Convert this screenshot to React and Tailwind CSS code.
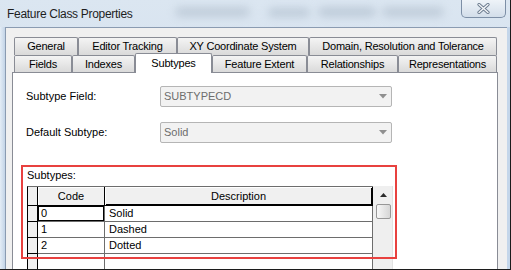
import React from "react";

const topTabs = [
  { label: "General", w: "w-[64px]" },
  { label: "Editor Tracking", w: "w-[99px]" },
  { label: "XY Coordinate System", w: "w-[132px]" },
  { label: "Domain, Resolution and Tolerance", w: "w-[188px]" },
];

const bottomTabs = [
  { label: "Fields", w: "w-[58px]" },
  { label: "Indexes", w: "w-[63px]" },
  { label: "Subtypes", w: "w-[77px]", active: true },
  { label: "Feature Extent", w: "w-[95px]" },
  { label: "Relationships", w: "w-[91px]" },
  { label: "Representations", w: "w-[99px]" },
];

const subtypes = [
  { code: "0", desc: "Solid" },
  { code: "1", desc: "Dashed" },
  { code: "2", desc: "Dotted" },
  { code: "", desc: "" },
];

const Tab = ({ label, w, active, tall }) => {
  if (active) {
    return (
      <div
        className={`relative z-10 -mb-px flex h-[20px] items-center justify-center rounded-t-[2px] border border-b-0 border-[#898c95] bg-white pb-[1px] ${w}`}
      >
        {label}
      </div>
    );
  }
  return (
    <div
      className={`flex ${tall ? "h-[18px]" : "h-[17px]"} items-center justify-center rounded-t-[2px] border border-b-0 border-[#898c95] bg-gradient-to-b from-[#f4f4f4] to-[#dadada] ${w}`}
    >
      {label}
    </div>
  );
};

const Dropdown = ({ value }) => (
  <div className="flex h-[21px] w-[232px] items-center justify-between rounded-[2px] border border-[#b5b5b5] bg-[#f2f2f2] pl-[3px] pr-[4px] text-[11px] text-[#6d6d6d]">
    <span>{value}</span>
    <svg width="8" height="5" viewBox="0 0 8 5">
      <path d="M0 0 H8 L4 4.5 Z" fill="#8f8f8f" />
    </svg>
  </div>
);

export default function App() {
  return (
    <div className="relative h-[270px] w-[511px] overflow-hidden border-b border-r border-[#1c1c1c] bg-gradient-to-b from-[#dbe6f1] to-[#c9d9ea] font-['Liberation_Sans',Arial,sans-serif] text-black">
      {/* title bar */}
      <div className="relative flex h-[27px] items-center">
        {/* blurred window behind the glass */}
        <div className="pointer-events-none absolute left-[175px] top-[7px] h-[10px] w-[75px] rounded-full bg-[#a7b5c4] opacity-50 blur-[4px]" />
        <div className="pointer-events-none absolute left-[268px] top-[8px] h-[9px] w-[42px] rounded-full bg-[#a3b2c2] opacity-50 blur-[4px]" />
        <div className="pointer-events-none absolute left-[318px] top-[7px] h-[10px] w-[58px] rounded-full bg-[#a3b2c2] opacity-50 blur-[4px]" />
        <div className="pointer-events-none absolute left-[382px] top-[7px] h-[10px] w-[62px] rounded-full bg-[#a7b5c4] opacity-50 blur-[4px]" />
        <span className="relative pl-[7px] text-[12px] tracking-[-0.3px] text-[#1e1e1e]">
          Feature Class Properties
        </span>
        <div className="relative ml-auto mr-[4px] flex h-[18px] w-[45px] self-start items-center justify-center rounded-b-[5px] border border-t-0 border-[#7d8fa6] bg-gradient-to-b from-[#eef3f8] to-[#d3deea]">
          <svg width="13" height="11" viewBox="0 0 13 11">
            <path d="M2 1.5 L11 9.5 M11 1.5 L2 9.5" stroke="#6a7a8e" strokeWidth="3.2" strokeLinecap="round" />
            <path d="M2 1.5 L11 9.5 M11 1.5 L2 9.5" stroke="#f4f6f8" strokeWidth="1.4" strokeLinecap="round" />
          </svg>
        </div>
      </div>

      <div className="flex h-[243px]">
        <div className="w-[5px] bg-gradient-to-r from-[#e4edf6] to-[#c3d4e7]" />

        {/* client area */}
        <div className="w-[502px] border-l border-t border-[#8a9bb1] bg-[#f0f0f0] pl-[6px] pt-[9px] text-[11px] tracking-[-0.2px]">
          <div className="ml-[2px] flex">
            {topTabs.map((t) => (
              <Tab key={t.label} {...t} tall />
            ))}
          </div>
          <div className="ml-[2px] flex h-[17px] items-end">
            {bottomTabs.map((t) => (
              <Tab key={t.label} {...t} />
            ))}
          </div>

          {/* tab page */}
          <div className="relative h-[210px] w-[486px] border border-[#898c95] bg-white pt-[13px] tracking-normal">
            <div className="flex items-center pl-[13px]">
              <span className="w-[134px]">Subtype Field:</span>
              <Dropdown value="SUBTYPECD" />
            </div>
            <div className="mt-[15px] flex items-center pl-[13px]">
              <span className="w-[134px]">Default Subtype:</span>
              <Dropdown value="Solid" />
            </div>

            <div className="ml-[14px] mt-[25px] leading-[14px]">Subtypes:</div>

            {/* subtypes grid */}
            <div className="ml-[14px] mt-[4px] flex">
              <div className="w-[346px] border-l border-t border-l-black border-t-[#6d6d6d]">
                <div className="flex">
                  <div className="h-[19px] w-[10px] border-b border-r border-black bg-[#f0f0f0]" />
                  <div className="flex h-[19px] w-[67px] items-center justify-center border-b border-r border-black bg-[#f0f0f0] shadow-[inset_1px_1px_0_#fff]">
                    Code
                  </div>
                  <div className="flex h-[19px] w-[268px] items-center justify-center border-b border-r border-black bg-[#f0f0f0] shadow-[inset_1px_1px_0_#fff,inset_-1px_-1px_0_#000]">
                    Description
                  </div>
                </div>
                {subtypes.map((row, i) => (
                  <div key={i} className="flex">
                    <div className="h-[16px] w-[10px] border-b border-r border-black bg-[#f0f0f0]" />
                    <div
                      className={`flex h-[16px] w-[67px] items-center border-b border-r border-[#6d6d6d] pl-[3px] ${
                        i === 0 ? "shadow-[inset_0_0_0_1px_#000]" : ""
                      }`}
                    >
                      {row.code}
                    </div>
                    <div className="flex h-[16px] w-[268px] items-center border-b border-r border-[#6d6d6d] pl-[4px]">
                      {row.desc}
                    </div>
                  </div>
                ))}
              </div>

              {/* scrollbar */}
              <div className="flex h-[90px] w-[20px] flex-col bg-[#efefef] shadow-[inset_-1px_0_0_#e2e2e2]">
                <div className="flex h-[17px] items-center justify-center">
                  <svg width="7" height="4" viewBox="0 0 7 4">
                    <path d="M3.5 0 L7 4 H0 Z" fill="#2b2b2b" />
                  </svg>
                </div>
                <div className="ml-[3px] mt-[1px] h-[15px] w-[15px] rounded-[2px] border border-[#979797] bg-gradient-to-r from-[#f7f7f7] to-[#d6d6d6]" />
              </div>
            </div>

            {/* annotation box */}
            <div className="pointer-events-none absolute left-[8px] top-[92px] h-[94px] w-[376px] border-2 border-[#e8413f]" />
          </div>
        </div>

        <div className="w-[3px] bg-[#c4d6ea]" />
      </div>
    </div>
  );
}
